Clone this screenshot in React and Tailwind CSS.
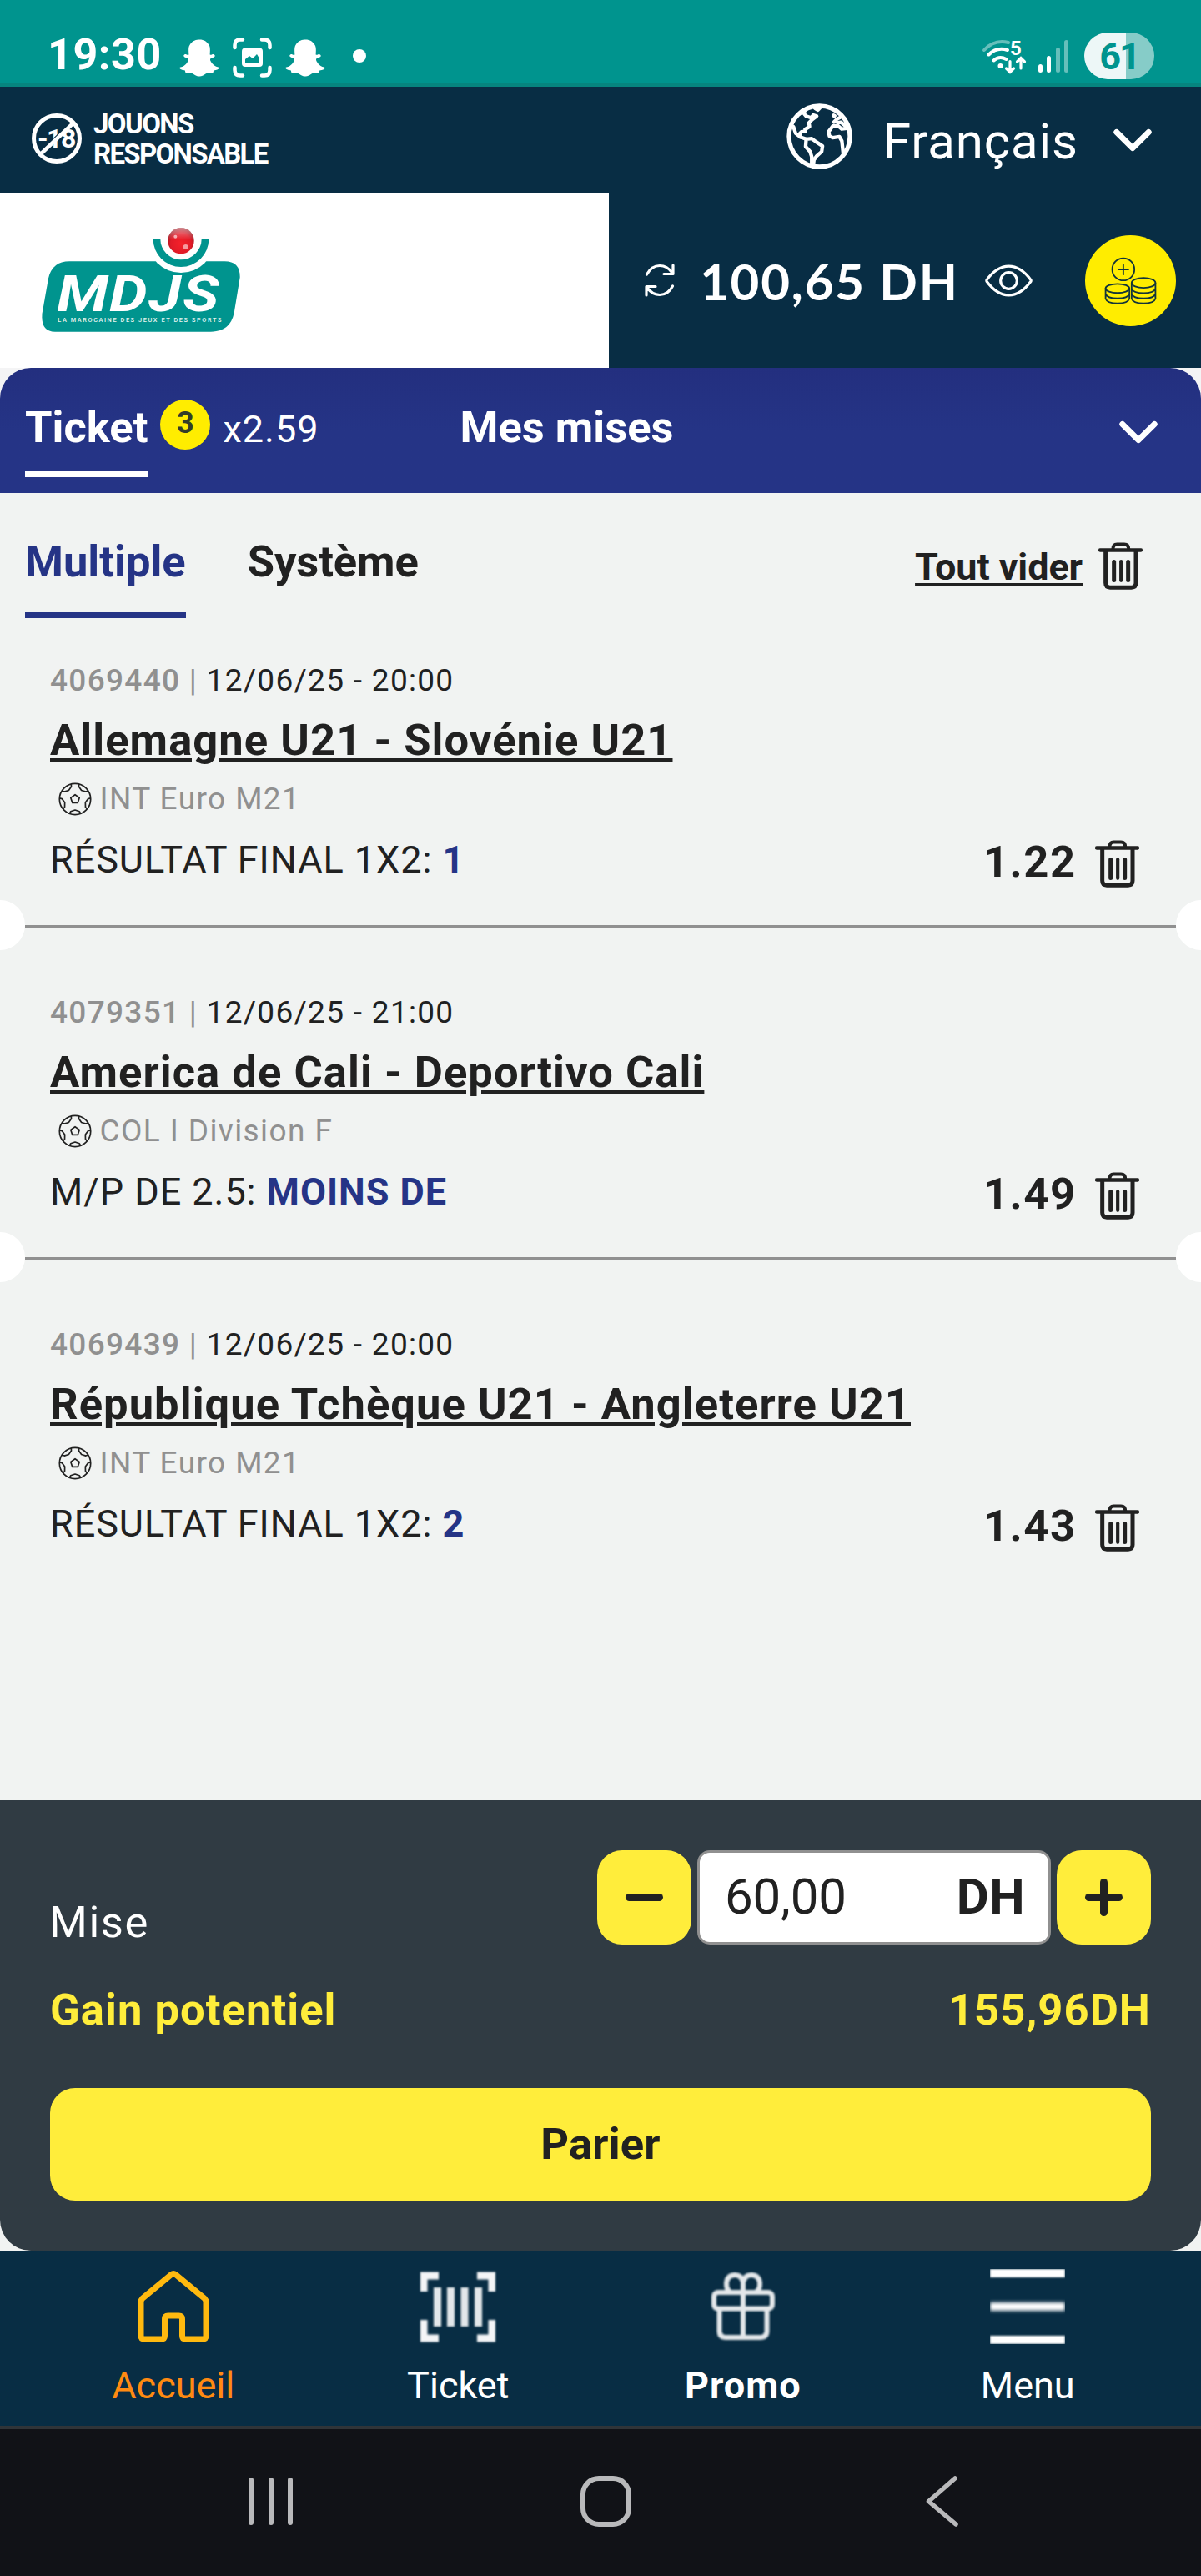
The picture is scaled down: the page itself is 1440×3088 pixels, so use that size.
import { FaSnapchatGhost } from "react-icons/fa";

const bets = [
  {
    id: "4069440",
    date: "12/06/25 - 20:00",
    match: "Allemagne U21 - Slovénie U21",
    league: "INT Euro M21",
    market: "RÉSULTAT FINAL 1X2:",
    pick: "1",
    odds: "1.22",
  },
  {
    id: "4079351",
    date: "12/06/25 - 21:00",
    match: "America de Cali - Deportivo Cali",
    league: "COL I Division F",
    market: "M/P DE 2.5:",
    pick: "MOINS DE",
    odds: "1.49",
  },
  {
    id: "4069439",
    date: "12/06/25 - 20:00",
    match: "République Tchèque U21 - Angleterre U21",
    league: "INT Euro M21",
    market: "RÉSULTAT FINAL 1X2:",
    pick: "2",
    odds: "1.43",
  },
];

function ScreenshotIcon() {
  return (
    <svg width="47" height="48" viewBox="0 0 47 48" fill="none" stroke="#fff" strokeWidth="4.5" strokeLinecap="round">
      <path d="M2.5 12V9q0-6.500 6.500-6.500h3M35 2.500h3q6.500 0 6.500 6.500v3M44.500 36v3q0 6.500-6.500 6.500h-3M12 45.500H9q-6.500 0-6.500-6.500v-3" />
      <rect x="11" y="12.500" width="25" height="22.500" rx="4" fill="#fff" stroke="none" />
      <path d="M15 30v-4l5-4 4 3 5-5 3 5v5z" fill="#00948e" stroke="none" />
    </svg>
  );
}

function WifiIcon() {
  return (
    <svg width="58" height="46" viewBox="0 0 58 46" className="overflow-visible" fill="none" stroke="#fff" strokeWidth="4" strokeLinecap="round">
      <path d="M3 15Q15 2 32 6" opacity=".4" />
      <path d="M8.500 20.500Q18 11 31 15" />
      <path d="M14.500 27.500Q21 21.500 29.500 26" />
      <circle cx="22.500" cy="34" r="3" fill="#fff" stroke="none" />
      <path d="M34 28.500V41M29.500 37l4.500 4.500 4.500-4.500M47 37V25M42.500 29l4.500-4.500 4.500 4.500" strokeWidth="3.200" />
      <text x="34" y="20.500" fontFamily="Roboto" fontSize="24" fontWeight="700" fill="#fff" stroke="none">5</text>
    </svg>
  );
}

function ResponsibleLogo() {
  return (
    <div className="flex text-[33px] font-bold leading-[36px]">
      <div className="relative h-[62px] w-[60px]">
        <span className="absolute top-[13px] left-[7px] text-[32px] leading-[36px] tracking-[-1.500px]">-18</span>
        <svg width="60" height="62" viewBox="0 0 60 62" className="absolute top-0 left-0" fill="none">
          <path d="M10.500 46.500L47.500 11" stroke="#082d44" strokeWidth="1.500" />
          <path d="M10.500 50L50 12.500" stroke="#fff" strokeWidth="4.500" />
          <circle cx="30" cy="31" r="27.500" stroke="#fff" strokeWidth="5" />
        </svg>
      </div>
      <div className="-mt-[4px] ml-[14px]">
        <p className="tracking-[-1.600px]">JOUONS</p>
        <p className="tracking-[-1.700px]">RESPONSABLE</p>
      </div>
    </div>
  );
}

function GlobeIcon() {
  return (
    <svg width="79" height="79" viewBox="37 28 238 238" className="block" fill="none" stroke="#fff" strokeWidth="13" strokeLinejoin="round" strokeLinecap="round">
      <circle cx="156" cy="147" r="110" strokeWidth="16" />
      <path d="M62 112L70 136L88 150L108 157M88 150L84 138L92 130L106 130L104 122L120 112L118 98L130 86L146 74L134 70L126 80L108 74L98 62L104 54" />
      <path d="M140 46L150 52L158 44" />
      <path d="M108 157L128 155L144 167L167 182L164 202L146 218L136 232L133 256M108 157L106 184L122 202L128 220L128 252" />
      <path d="M256 118L236 120L222 108L204 110L189 130L192 146L204 152L228 148L237 164L242 210" />
      <path d="M208 72L210 73" strokeWidth="15" />
      <path d="M232 78L220 84L208 96M222 98L234 96L248 108" />
    </svg>
  );
}

function Chevron() {
  return (
    <svg width="46" height="28" viewBox="0 0 46 28" className="block" fill="none" stroke="#fff" strokeWidth="7" strokeLinecap="round" strokeLinejoin="round">
      <path d="M3.800 4.500L23 23.500L42.200 4.500" />
    </svg>
  );
}

function BrandLogo() {
  return (
    <svg width="240" height="127" viewBox="60 455 720 381" className="block overflow-visible">
      <defs>
        <radialGradient id="ball" cx=".5" cy=".6" r=".56">
          <stop offset="0" stopColor="#f5202a" />
          <stop offset=".7" stopColor="#e11b28" />
          <stop offset="1" stopColor="#a01520" />
        </radialGradient>
        <linearGradient id="shine" x1="0" y1="0" x2="0" y2="1">
          <stop offset="0" stopColor="#fff" stopOpacity=".5" />
          <stop offset=".45" stopColor="#fff" stopOpacity="0" />
        </linearGradient>
      </defs>
      <path d="M160 579H718Q774 579 773 637L752 765Q738 832 668 832H108Q55 832 62 765L84 640Q98 579 160 579Z" fill="#00948e" />
      <circle cx="561" cy="499" r="121" fill="#fff" />
      <path d="M461 499A100 100 0 0 0 661 499H635A74 74 0 0 1 487 499Z" fill="#00948e" />
      <circle cx="561" cy="505" r="47" fill="url(#ball)" />
      <circle cx="561" cy="505" r="47" fill="url(#shine)" />
      <circle cx="541" cy="490" r="6" fill="#fff" opacity=".6" />
      <circle cx="578" cy="527" r="9" fill="#fff" opacity=".55" />
      <g transform="scale(1.180 1)">
        <text x="97 257 376 481" y="758" fontFamily="Roboto" fontSize="184" fontWeight="700" fontStyle="italic" fill="#fff">MDJS</text>
      </g>
      <text x="118" y="796" fontFamily="Roboto" fontSize="22" fontWeight="500" fill="#e6f4f3" textLength="588" lengthAdjust="spacing">LA MAROCAINE DES JEUX ET DES SPORTS</text>
    </svg>
  );
}

function RefreshIcon() {
  return (
    <svg width="36" height="40" viewBox="0 0 36 40" className="block" fill="none" stroke="#fff" strokeWidth="3.200" strokeLinecap="round" strokeLinejoin="round">
      <path d="M2.500 13Q8 2.500 18 2.500Q27 2.500 33 11M34 2V12.500H23" />
      <path d="M33.500 27Q28 37.500 18 37.500Q9 37.500 3 29M2 38V27.500H13" />
    </svg>
  );
}

function EyeIcon() {
  return (
    <svg width="57" height="39" viewBox="751.500 604.500 171 117" className="block" fill="none" stroke="#fff" strokeWidth="9.500" strokeLinejoin="round">
      <path d="M758 660Q794 611 837 611Q880 611 916 660Q918 663 916 666Q880 715 837 715Q794 715 758 666Q756 663 758 660Z" />
      <circle cx="837" cy="663" r="29.500" />
    </svg>
  );
}

function CoinsIcon() {
  return (
    <svg width="109" height="109" viewBox="1113 500 328 328" className="block" fill="none" stroke="#12343a" strokeWidth="5.500" strokeLinecap="round">
      <circle cx="1251" cy="623" r="40" />
      <path d="M1233 624H1269M1251 606V642" />
      <ellipse cx="1230" cy="692" rx="43" ry="16.500" />
      <path d="M1187 692V729Q1192 746 1230 746Q1268 746 1273 729V692M1187 711Q1192 728 1230 728Q1268 728 1273 711" />
      <ellipse cx="1324" cy="672" rx="43" ry="18" />
      <path d="M1281 672V729Q1286 746 1324 746Q1362 746 1367 729V672M1281 692Q1286 709 1324 709Q1362 709 1367 692M1281 711Q1286 728 1324 728Q1362 728 1367 711" />
    </svg>
  );
}

function TrashIcon() {
  return (
    <svg width="53" height="57" viewBox="470 27.500 159 171" className="block" fill="none" stroke="#212121" strokeLinecap="round">
      <path d="M476 56H623" strokeWidth="13" />
      <path d="M522 54Q522 35 537 35H563Q579 35 579 54" strokeWidth="12" />
      <path d="M496 60V174Q496 190 512 190H589Q605 190 605 174V60" strokeWidth="15" />
      <path d="M526 98V164M577 98V164" strokeWidth="15" />
      <path d="M551.500 97V165" strokeWidth="12.500" />
    </svg>
  );
}

function BallIcon() {
  return (
    <svg width="40" height="40" viewBox="-20 -20 40 40" className="block" fill="none" stroke="#212121" strokeWidth="1.700" strokeLinejoin="round">
      <circle r="18.700" />
      <path d="M0-5.300L5.200-1.600L3.200 4.400H-3.200L-5.200-1.600Z" />
      {[0, 72, 144, 216, 288].map((angle) => (
        <path key={angle} d="M-6.800 17.400L-5.200 14.800L0 13L5.200 14.800L6.800 17.400" transform={`rotate(${angle})`} />
      ))}
    </svg>
  );
}

function HomeIcon() {
  return (
    <svg width="90" height="90" viewBox="0 0 90 90" className="block" fill="none" stroke="#ffb90f" strokeWidth="7" strokeLinejoin="round">
      <path d="M42.500 6.500Q45 4.500 47.500 6.500L82 35Q84 37 84 39.500V80q0 4-4 4H59.500q-4 0-4-4V60q0-4-4-4H38.500q-4 0-4 4V80q0 4-4 4H10q-4 0-4-4V39.500Q6 37 8 35Z" />
    </svg>
  );
}

function TicketIcon() {
  return (
    <svg width="90" height="90" viewBox="0 0 90 90" className="block blur-[1px]" fill="none" stroke="#f4f5f7" strokeWidth="9">
      <path d="M4 27V8H22M68 8H86V27M86 61V83H68M22 83H4V61" />
      <path d="M20.500 22V69M36.500 22V69M53 22V69M69.500 22V69" stroke="#e3e7ea" />
    </svg>
  );
}

function GiftIcon() {
  return (
    <svg width="90" height="90" viewBox="0 0 90 90" className="block blur-[1px]" fill="none" stroke="#e3e7ea" strokeWidth="6">
      <rect x="10" y="28" width="70" height="19.500" rx="5" />
      <path d="M16.500 48V74q0 8 8 8H65.500q8 0 8-8V48M45 12V82" />
      <path d="M45 27V16Q43 7 35 7Q25 8 25 18Q25 24 29 27M45 27V16Q47 7 55 7Q65 8 65 18Q65 24 61 27" />
    </svg>
  );
}

function MenuIcon() {
  return (
    <div className="flex h-[90px] w-[90px] flex-col justify-between overflow-hidden">
      <div className="h-[10px] bg-white blur-[1px]" />
      <div className="h-[10px] bg-white blur-[2px]" />
      <div className="h-[10px] bg-white blur-[1px]" />
    </div>
  );
}

const tabs = [
  { label: "Accueil", icon: HomeIcon, style: "text-[#ff8a12]" },
  { label: "Ticket", icon: TicketIcon, style: "text-white" },
  { label: "Promo", icon: GiftIcon, style: "font-bold tracking-[1px] text-white" },
  { label: "Menu", icon: MenuIcon, style: "text-white" },
];

function StatusBar() {
  return (
    <div className="flex h-[104px] items-center border-b-4 border-[#06857f] bg-[#00948e] pt-[34px] pl-[57px] pr-[56px] text-white">
      <span className="-mt-[2px] w-[158px] text-[52px] font-bold leading-[62px] tracking-[0.600px]">19:30</span>
      <FaSnapchatGhost className="mt-1 h-[47px] w-[48px]" />
      <div className="mt-1 ml-[16px] mr-[16px]">
        <ScreenshotIcon />
      </div>
      <FaSnapchatGhost className="mt-1 h-[47px] w-[48px]" />
      <div className="ml-[33px] h-4 w-4 rounded-full bg-white" />
      <div className="ml-auto mt-[2px]">
        <WifiIcon />
      </div>
      <div className="ml-[10px] flex h-[39px] items-end gap-[5.500px]">
        <div className="h-[10px] w-[5px] rounded-full bg-white" />
        <div className="h-[20px] w-[5px] rounded-full bg-white" />
        <div className="h-[30px] w-[5px] rounded-full bg-white/40" />
        <div className="h-[39px] w-[5px] rounded-full bg-white/40" />
      </div>
      <div className="ml-[19px] flex h-[56px] w-[84px] items-center justify-center rounded-full bg-[linear-gradient(90deg,#edf7f7_60%,#86ccc8_60%)] text-[45px] font-bold leading-none tracking-[-2px] text-[#00948e]">
        61
      </div>
    </div>
  );
}

function BetItem({ bet, last }) {
  return (
    <div className="relative h-[398px] px-[60px] pt-[54px]">
      <p className="flex h-[50px] items-center text-[37px] tracking-[1.300px]">
        <span className="font-medium text-[#909090]">{bet.id}</span>
        <span className="whitespace-pre text-[#909090]"> | </span>
        <span className="text-[#212121]">{bet.date}</span>
      </p>
      <p className="mt-[11px] h-[70px] text-[52.500px] font-bold leading-[70px] tracking-[1.050px] text-[#212121] underline decoration-[5px] underline-offset-[4px]">
        {bet.match}
      </p>
      <div className="mt-[11px] flex h-[50px] items-center pl-[10px]">
        <BallIcon />
        <span className="ml-[9.500px] text-[37px] leading-[50px] tracking-[1.400px] text-[#909090]">{bet.league}</span>
      </div>
      <div className="mt-[14px] flex h-[70px] items-center justify-between">
        <p className="-mt-[3px] text-[45px] leading-[60px] tracking-[0.950px] text-[#212121]">
          {bet.market} <span className="font-bold text-[#253486]">{bet.pick}</span>
        </p>
        <div className="mr-[14px] flex items-center">
          <span className="mt-[2px] w-[134px] text-[52.500px] font-bold leading-[60px] tracking-[1.500px] text-[#212121]">{bet.odds}</span>
          <div className="mt-[7px]">
            <TrashIcon />
          </div>
        </div>
      </div>
      {!last && (
        <>
          <div className="absolute right-[30px] bottom-[23px] left-[30px] h-[3px] bg-[#909090]" />
          <div className="absolute bottom-[-4px] left-[-30px] h-[60px] w-[60px] rounded-full bg-white" />
          <div className="absolute right-[-30px] bottom-[-4px] h-[60px] w-[60px] rounded-full bg-white" />
        </>
      )}
    </div>
  );
}

export default function App() {
  return (
    <div className="flex h-[3088px] w-[1440px] flex-col overflow-hidden bg-[#f1f3f2] font-['Roboto',sans-serif]">
      <StatusBar />

      <header className="bg-[#082d44] text-white">
        <div className="flex h-[127px] items-start pl-[38px]">
          <div className="mt-[31px]">
            <ResponsibleLogo />
          </div>
          <div className="mt-[20px] mr-[37px] ml-auto">
            <GlobeIcon />
          </div>
          <span className="mt-[30px] w-[276px] text-[60px] leading-[72px] tracking-[0.860px]">Français</span>
          <div className="mt-[50px] mr-[59px]">
            <Chevron />
          </div>
        </div>
        <div className="flex h-[210px]">
          <div className="w-[730px] bg-white pt-[41px] pl-[50px]">
            <BrandLogo />
          </div>
          <div className="flex flex-1 items-center pl-[43px]">
            <RefreshIcon />
            <span className="mt-[2px] ml-[30px] w-[342px] font-['Lato',sans-serif] text-[60px] font-bold leading-[70px] tracking-[1.800px]">100,65 DH</span>
            <EyeIcon />
            <div className="ml-[63px] rounded-full bg-[#ffed00]">
              <CoinsIcon />
            </div>
          </div>
        </div>
      </header>

      <div className="bg-[#f4f4f5]">
        <div className="flex h-[150px] items-start rounded-t-[37px] bg-linear-to-b from-[#232f7f] to-[#253486] to-50% px-[30px] text-white">
          <div className="h-[131px] border-b-[7px] border-white pt-[36px]">
            <span className="block text-[52.500px] font-bold leading-[70px]">Ticket</span>
          </div>
          <div className="mt-[38px] ml-[15px] flex h-[60px] w-[60px] justify-center rounded-full bg-[#ffed00] text-[36px] font-bold leading-[57px] text-[#333d29]">
            3
          </div>
          <span className="mt-[44px] ml-[15px] text-[45px] leading-[60px] tracking-[1px]">x2.59</span>
          <span className="mt-[36px] ml-[169px] text-[52.500px] font-bold leading-[70px]">Mes mises</span>
          <div className="mt-[63px] mr-[22px] ml-auto">
            <Chevron />
          </div>
        </div>
      </div>

      <div className="flex h-[150px] shrink-0 items-start px-[30px]">
        <div className="h-[150px] border-b-[7px] border-[#253486] pt-[47px] text-[52.500px] font-bold leading-[70px] text-[#253486]">
          Multiple
        </div>
        <div className="ml-[74px] pt-[47px] text-[52.500px] font-bold leading-[70px] tracking-[-0.100px] text-[#212121]">Système</div>
        <div className="mt-[56px] mr-[40px] ml-auto flex items-center">
          <span className="mt-[3px] text-[45px] font-bold leading-[60px] tracking-[-0.100px] text-[#212121] underline decoration-[4px] underline-offset-[4px]">
            Tout vider
          </span>
          <div className="ml-[19px]">
            <TrashIcon />
          </div>
        </div>
      </div>

      <main className="-mt-[4px] flex-1">
        {bets.map((bet, index) => (
          <BetItem key={bet.id} bet={bet} last={index === bets.length - 1} />
        ))}
      </main>

      <section className="h-[540px] shrink-0 rounded-b-[37px] bg-[#303b43] px-[60px] pt-[60px]">
        <div className="flex h-[113px] items-start">
          <span className="mt-[51px] -ml-[1px] text-[52.500px] leading-[70px] tracking-[1.600px] text-white">Mise</span>
          <button className="ml-auto flex h-[113px] w-[113px] items-center justify-center rounded-[30px] bg-[#ffed3b]">
            <div className="h-[9px] w-[45px] rounded-full bg-[#212121]" />
          </button>
          <div className="mx-[7px] flex h-[113px] w-[424px] items-center justify-between rounded-[15px] border-[3px] border-[#909090] bg-white pr-[28px] pl-[30px] text-[#212121]">
            <span className="-mt-[1px] text-[60px] leading-none tracking-[-0.200px]">60,00</span>
            <span className="-mt-[2px] text-[60px] font-bold leading-none tracking-[0.500px]">DH</span>
          </div>
          <button className="grid h-[113px] w-[113px] place-items-center rounded-[30px] bg-[#ffed3b]">
            <div className="col-start-1 row-start-1 h-[9px] w-[45px] rounded-full bg-[#212121]" />
            <div className="col-start-1 row-start-1 h-[45px] w-[9px] rounded-full bg-[#212121]" />
          </button>
        </div>
        <div className="mt-[43px] flex h-[70px] items-center justify-between text-[52.500px] font-bold leading-[70px] tracking-[1.050px] text-[#ffed3b]">
          <span>Gain potentiel</span>
          <span>155,96DH</span>
        </div>
        <button className="mt-[59px] flex h-[135px] w-full items-center justify-center rounded-[30px] bg-[#ffed3b] text-[52.500px] font-bold tracking-[0.200px] text-[#212121]">
          Parier
        </button>
      </section>

      <nav className="flex h-[210px] shrink-0 bg-[#082d44] px-[37px] pt-[22px]">
        {tabs.map(({ label, icon: Icon, style }) => (
          <div key={label} className="flex flex-1 flex-col items-center">
            <Icon />
            <span className={`mt-[20px] text-[45px] leading-[60px] ${style}`}>{label}</span>
          </div>
        ))}
      </nav>

      <div className="flex h-[180px] shrink-0 border-t-4 border-[#303438] bg-[#111217] pt-[56px] pl-[298px]">
        <div className="mt-[2px] flex h-[57px] gap-[17.500px]">
          <div className="w-[6px] rounded-full bg-[#b9b9bb]" />
          <div className="w-[6px] rounded-full bg-[#b9b9bb]" />
          <div className="w-[6px] rounded-full bg-[#b9b9bb]" />
        </div>
        <div className="ml-[345px] h-[61px] w-[61px] rounded-[22px] border-[6px] border-[#b9b9bb]" />
        <svg width="40" height="61" viewBox="0 0 40 61" className="ml-[353px]" fill="none" stroke="#b9b9bb" strokeWidth="5.500" strokeLinecap="round" strokeLinejoin="round">
          <path d="M35 3L3.500 30.500L36 58" />
        </svg>
      </div>
    </div>
  );
}
